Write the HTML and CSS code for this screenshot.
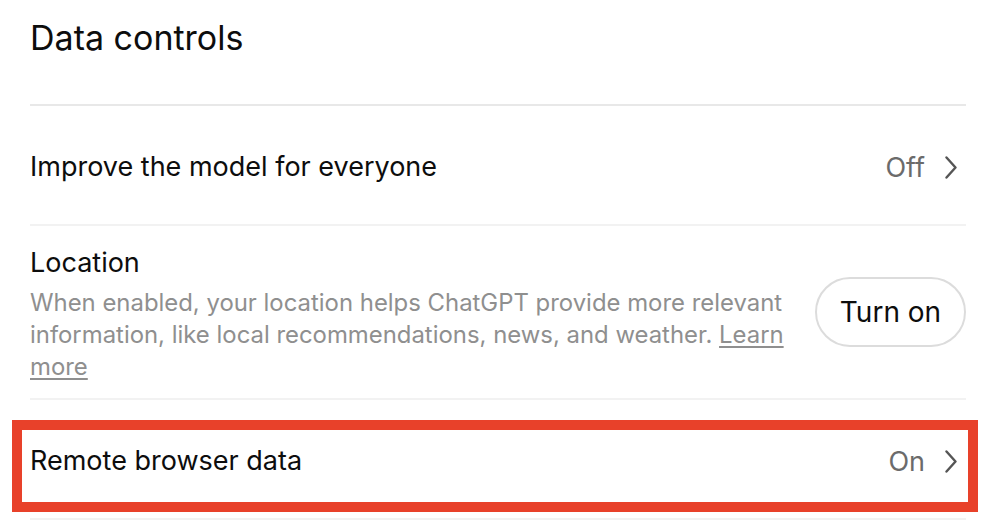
FILE: index.html
```html
<!DOCTYPE html>
<html lang="en">

<head>
    <meta charset="UTF-8">
    <title>Data controls</title>
    <link rel="stylesheet" href="styles.css">
</head>

<body>
    <div class="panel">
        <h1 class="titulo">Data controls</h1>

        <div class="fila">
            <span class="fila-texto">Improve the model for everyone</span>
            <span class="fila-valor">Off
                <svg class="chevron" viewBox="0 0 12 23" width="12" height="23">
                    <path d="M1.5 1.5 L10.5 11.5 L1.5 21.5" fill="none" stroke="currentColor" stroke-width="2.4" stroke-linecap="round" stroke-linejoin="round"/>
                </svg>
            </span>
        </div>

        <div class="fila fila-alta">
            <div class="fila-info">
                <div class="fila-texto">Location</div>
                <p class="fila-desc">When enabled, your location helps ChatGPT provide more relevant information, like local recommendations, news, and weather. <a href="#">Learn more</a></p>
            </div>
            <button class="boton">Turn on</button>
        </div>

        <div class="fila">
            <span class="fila-texto">Remote browser data</span>
            <span class="fila-valor">On
                <svg class="chevron" viewBox="0 0 12 23" width="12" height="23">
                    <path d="M1.5 1.5 L10.5 11.5 L1.5 21.5" fill="none" stroke="currentColor" stroke-width="2.4" stroke-linecap="round" stroke-linejoin="round"/>
                </svg>
            </span>
            <div class="marca"></div>
        </div>
    </div>
</body>

</html>
```

FILE: styles.css
```css
body {
    margin: 0;
    background-color: #fff;
    font-family: Inter, "Noto Sans", sans-serif;
    color: #0d0d0d;
}

.panel {
    padding: 0 24px 0 30px;
}

.titulo {
    margin: 0;
    height: 106px;
    padding-top: 18px;
    box-sizing: border-box;
    font-size: 34px;
    line-height: 40px;
    font-weight: 400;
    border-bottom: 2px solid #e8e8e8;
}

.fila {
    display: flex;
    align-items: center;
    justify-content: space-between;
    height: 120px;
    padding-top: 4px;
    border-bottom: 2px solid #f2f2f2;
    box-sizing: border-box;
    position: relative;
}

.fila-texto {
    font-size: 27px;
    line-height: 32px;
}

.fila-valor {
    display: flex;
    align-items: center;
    gap: 20px;
    padding-right: 9px;
    font-size: 27px;
    color: #6b6b6b;
}

.chevron {
    color: #555;
}

.fila-alta {
    height: 174px;
    align-items: flex-start;
    padding-top: 21px;
}

.fila-info {
    width: 760px;
}

.fila-desc {
    margin: 8px 0 0;
    font-size: 23.9px;
    line-height: 32px;
    color: #8f8f8f;
}

.fila-desc a {
    color: #8f8f8f;
    text-underline-offset: 3px;
}

.boton {
    margin-top: 30px;
    width: 151px;
    height: 70px;
    border: 2px solid #dcdcdc;
    border-radius: 35px;
    background-color: #fff;
    font-family: inherit;
    font-size: 28px;
    color: #0d0d0d;
}

.marca {
    position: absolute;
    left: -18px;
    right: -12px;
    top: 20px;
    bottom: 6px;
    border: 10px solid #e8412a;
}
```
